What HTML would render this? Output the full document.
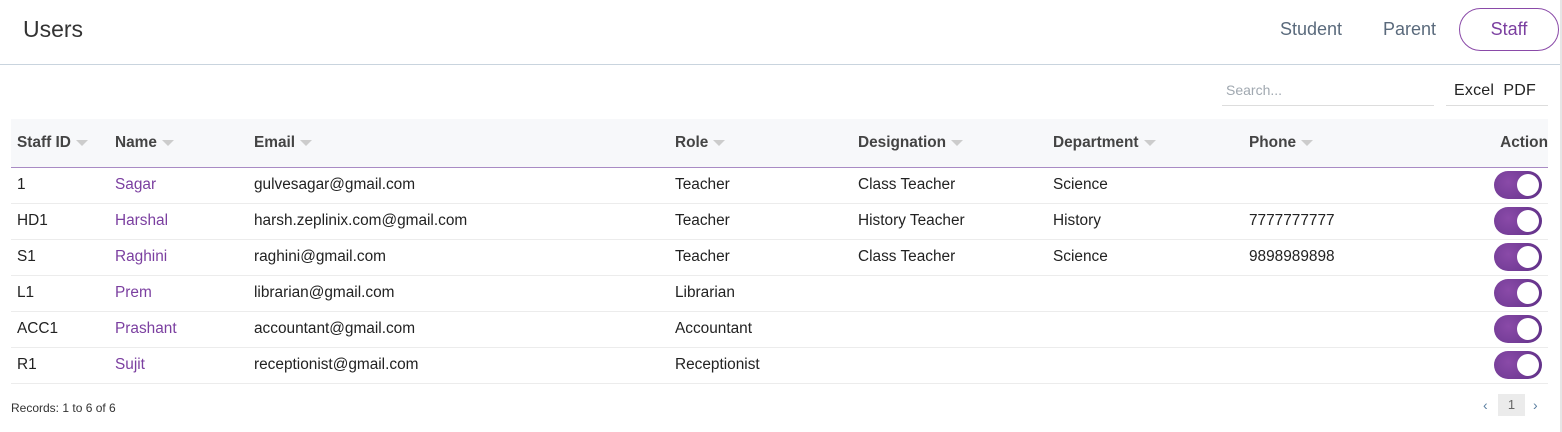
<!DOCTYPE html>
<html><head><style>
*{margin:0;padding:0;box-sizing:border-box}
body{width:1562px;height:432px;background:#fff;font-family:"Liberation Sans",sans-serif;color:#333;position:relative;overflow:hidden}
.abs{position:absolute;white-space:nowrap}
.hdr{position:absolute;left:0;top:0;width:1560px;height:65px;border-bottom:1px solid #c9d4de}
.vline{position:absolute;left:1560px;top:0;width:2px;height:432px;background:#e6e6e6}
th,td{text-align:left;font-size:15.4px;white-space:nowrap}
table{position:absolute;left:11px;top:119px;width:1537px;border-collapse:collapse}
th{height:48px;background:#f7f8fa;font-weight:bold;color:#444;border-bottom:1px solid #a98bc4;padding-left:6px}
td{height:36px;border-bottom:1px solid #ececec;padding-left:6px;color:#222}
td.n{color:#7b3fa0}
.ar{display:inline-block;width:0;height:0;border-left:6px solid transparent;border-right:6px solid transparent;border-top:6px solid #ccc;margin-left:5px;vertical-align:middle}
.tg{display:inline-block;width:48px;height:28px;border-radius:14px;background:radial-gradient(circle at 30% 40%,#8a4aa8,#5e2f86);position:relative;vertical-align:middle}
.tg:after{content:"";position:absolute;right:3px;top:3px;width:22px;height:22px;border-radius:50%;background:#fff}
</style></head><body>
<div class="hdr"></div>
<div class="vline"></div>
<div class="abs" style="left:23px;top:16px;font-size:23px;color:#333">Users</div>
<div class="abs" style="left:1280px;top:19px;font-size:18px;color:#5a6a7c">Student</div>
<div class="abs" style="left:1383px;top:19px;font-size:18px;color:#5a6a7c">Parent</div>
<div class="abs" style="left:1459px;top:8px;width:100px;height:43px;border:1px solid #8a4aa8;border-radius:22px;font-size:18px;color:#7b3fa0;text-align:center;line-height:41px">Staff</div>
<div class="abs" style="left:1222px;top:82px;width:212px;height:24px;border-bottom:1px solid #ddd;font-size:14px;color:#a0a8b0;padding-left:4px">Search...</div>
<div class="abs" style="left:1446px;top:82px;width:102px;height:24px;border-bottom:1px solid #ddd;font-size:16px;color:#222;padding-left:8px;letter-spacing:0.2px">Excel&nbsp;&nbsp;PDF</div>
<table>
<tr><th style="width:98px">Staff ID<span class="ar"></span></th><th style="width:139px">Name<span class="ar"></span></th><th style="width:421px">Email<span class="ar"></span></th><th style="width:183px">Role<span class="ar"></span></th><th style="width:195px">Designation<span class="ar"></span></th><th style="width:196px">Department<span class="ar"></span></th><th>Phone<span class="ar"></span></th><th style="text-align:right;padding-right:0">Action</th></tr>
<tr><td>1</td><td class="n">Sagar</td><td>gulvesagar@gmail.com</td><td>Teacher</td><td>Class Teacher</td><td>Science</td><td></td><td style="text-align:right;padding-right:6px"><span class="tg"></span></td></tr>
<tr><td>HD1</td><td class="n">Harshal</td><td>harsh.zeplinix.com@gmail.com</td><td>Teacher</td><td>History Teacher</td><td>History</td><td>7777777777</td><td style="text-align:right;padding-right:6px"><span class="tg"></span></td></tr>
<tr><td>S1</td><td class="n">Raghini</td><td>raghini@gmail.com</td><td>Teacher</td><td>Class Teacher</td><td>Science</td><td>9898989898</td><td style="text-align:right;padding-right:6px"><span class="tg"></span></td></tr>
<tr><td>L1</td><td class="n">Prem</td><td>librarian@gmail.com</td><td>Librarian</td><td></td><td></td><td></td><td style="text-align:right;padding-right:6px"><span class="tg"></span></td></tr>
<tr><td>ACC1</td><td class="n">Prashant</td><td>accountant@gmail.com</td><td>Accountant</td><td></td><td></td><td></td><td style="text-align:right;padding-right:6px"><span class="tg"></span></td></tr>
<tr><td>R1</td><td class="n">Sujit</td><td>receptionist@gmail.com</td><td>Receptionist</td><td></td><td></td><td></td><td style="text-align:right;padding-right:6px"><span class="tg"></span></td></tr>
</table>
<div class="abs" style="left:11px;top:401px;font-size:12px;color:#333">Records: 1 to 6 of 6</div>
<div class="abs" style="left:1483px;top:397px;font-size:14px;color:#5a7ea0">‹</div>
<div class="abs" style="left:1498px;top:394px;width:27px;height:22px;background:#ebebeb;font-size:13px;color:#666;text-align:center;line-height:22px">1</div>
<div class="abs" style="left:1533px;top:397px;font-size:14px;color:#5a7ea0">›</div>
</body></html>
